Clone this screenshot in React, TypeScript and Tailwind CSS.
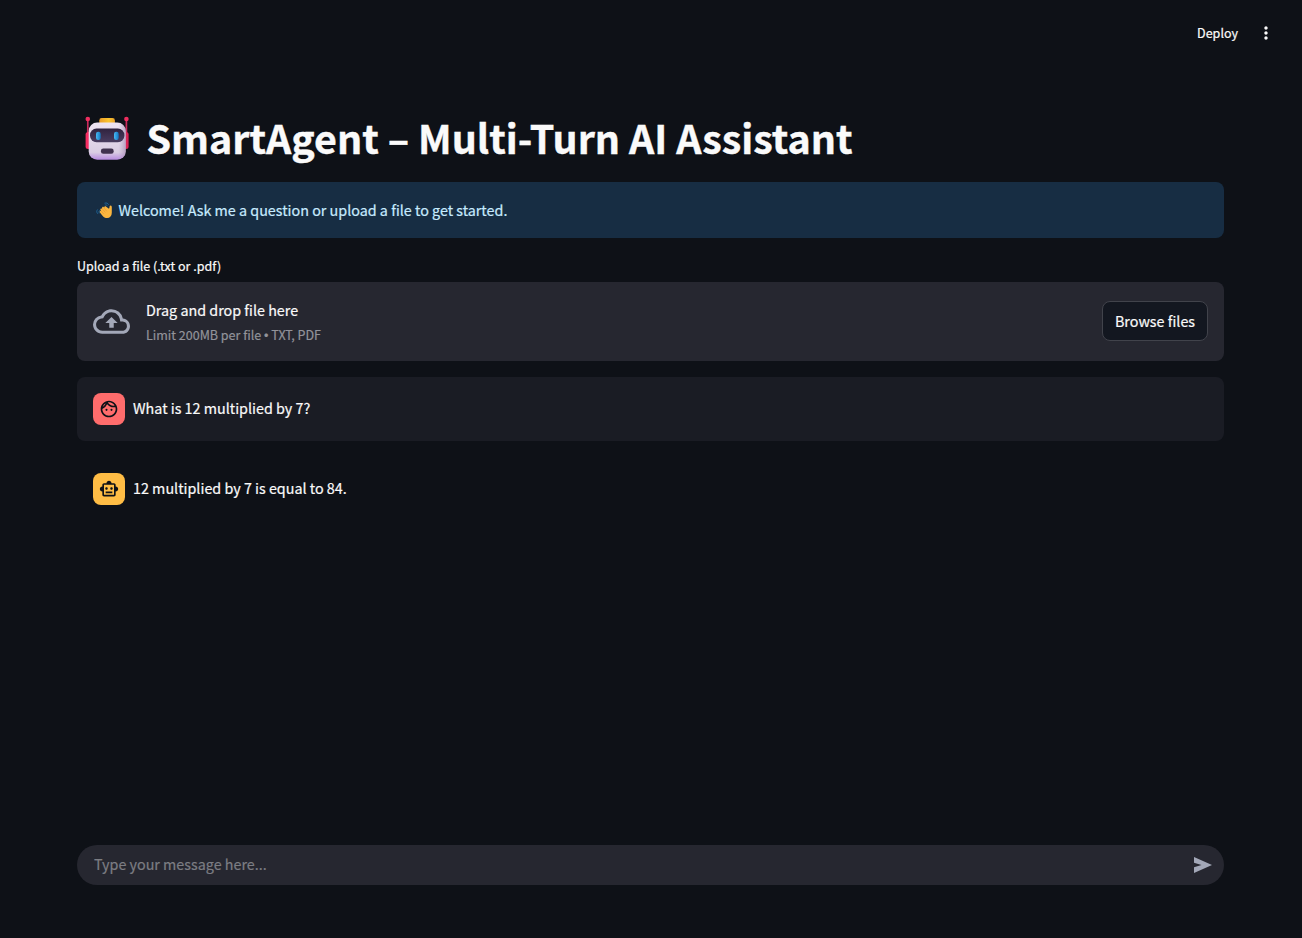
import type { ReactNode } from "react";
import { MdMoreVert, MdOutlineBackup, MdOutlineFace, MdOutlineSmartToy } from "react-icons/md";

function RobotEmoji() {
  return (
    <svg viewBox="0 0 46 46" className="h-[46px] w-[46px] shrink-0" aria-hidden="true">
      <defs>
        <linearGradient id="head" x1="0" y1="0" x2="0" y2="1">
          <stop offset="0" stopColor="#eee4f2" />
          <stop offset="0.8" stopColor="#dacde3" />
          <stop offset="1" stopColor="#b88be0" />
        </linearGradient>
        <linearGradient id="side" x1="0" y1="0" x2="1" y2="0">
          <stop offset="0" stopColor="#b9a5bf" stopOpacity="0" />
          <stop offset="0.8" stopColor="#b9a5bf" stopOpacity="0" />
          <stop offset="1" stopColor="#a78bb4" stopOpacity="0.7" />
        </linearGradient>
        <linearGradient id="visor" x1="0" y1="0" x2="0" y2="1">
          <stop offset="0" stopColor="#30233f" />
          <stop offset="1" stopColor="#4a3d61" />
        </linearGradient>
        <linearGradient id="eye" x1="0" y1="0" x2="1" y2="0">
          <stop offset="0" stopColor="#49baf4" />
          <stop offset="1" stopColor="#1477c2" />
        </linearGradient>
        <linearGradient id="cap" x1="0" y1="0" x2="1" y2="0">
          <stop offset="0" stopColor="#e99a28" />
          <stop offset="0.6" stopColor="#fbc52f" />
          <stop offset="1" stopColor="#e8a22a" />
        </linearGradient>
      </defs>
      <path d="M3.8 3v17M42.4 3v17" stroke="#c92b5c" strokeWidth="1.7" />
      <circle cx="3.8" cy="3" r="2.3" fill="#ef2e5f" />
      <circle cx="42.4" cy="3" r="2.3" fill="#ef2e5f" />
      <rect x="1.6" y="16" width="6" height="17" rx="2.5" fill="#f62d62" />
      <rect x="38.6" y="16" width="6" height="17" rx="2.5" fill="#d92456" />
      <rect x="15.3" y="2" width="15.6" height="7" rx="2.4" fill="url(#cap)" />
      <rect x="4.7" y="6.6" width="37" height="37.2" rx="8.5" fill="url(#head)" />
      <rect x="4.7" y="6.6" width="37" height="37.2" rx="8.5" fill="url(#side)" />
      <rect x="6" y="12.6" width="34.4" height="13.6" rx="6.5" fill="url(#visor)" />
      <rect x="12" y="15.7" width="4.7" height="8.2" rx="2.2" fill="url(#eye)" />
      <rect x="30" y="15.7" width="4.7" height="8.2" rx="2.2" fill="url(#eye)" />
      <rect x="16.9" y="32.6" width="12.8" height="5.2" rx="2.4" fill="#41324f" />
    </svg>
  );
}

function WaveEmoji() {
  return (
    <svg viewBox="0 0 18 18" className="h-[18px] w-[18px] shrink-0" aria-hidden="true">
      <path d="M1.4 8.8c-1 1.2-.9 2.5.2 3.7M3.4 9.6c-.7.8-.6 1.7 0 2.4M8.9 2.1c1.7-.5 3 .1 3.5 1.3M9.2 3.900c.9-.2 1.6.1 2 .8" fill="none" stroke="#1e659a" strokeWidth="1" strokeLinecap="round" />
      <path d="M14.600 4.500c1 0 1.200.9 1.200 1.900v5.400c0 3.200-1.900 5.200-4.600 5.300-2 0-3.600-.9-4.700-2.400l-2.600-3.100c-.7-1.100.4-2 1.200-1.200l-.6-1.400c-.6-1.100.7-2 1.500-1.200l.1-.6c-.3-1.100 1-1.800 1.700-1l.5.4c-.1-1.200 1.200-1.700 1.900-.8l2.800 2c.3-.6.4-.8.500-1.500.1-1 .2-1.800 1.100-1.800Z" fill="#fbb63f" />
      <path d="m5.300 10.200 2.300 2.500M6.400 8.100l2.700 3.100M8.300 7.300l2.300 2.700" stroke="#dd8e34" strokeWidth=".5" strokeLinecap="round" />
    </svg>
  );
}

function Message({ icon, avatar, panel, children }: { icon: ReactNode; avatar: string; panel: string; children: ReactNode }) {
  return (
    <div className={`flex h-16 items-center gap-2 rounded-lg px-4 ${panel}`}>
      <div className={`flex h-8 w-8 items-center justify-center rounded-lg text-[#0e1117] ${avatar}`}>{icon}</div>
      <p className="pb-0.5 text-[14.33px] leading-6">{children}</p>
    </div>
  );
}

export default function App() {
  return (
    <div className="flex h-[938px] w-full flex-col bg-[#0e1117] font-['Noto_Sans_CJK_SC',sans-serif] text-[#fafafa] [-webkit-text-stroke:0.2px]">
      <header className="flex h-[66px] shrink-0 items-center justify-end gap-[18px] pr-[26px]">
        <button className="text-[12.53px] leading-5">Deploy</button>
        <MdMoreVert size={20} />
      </header>
      <main className="flex min-h-0 flex-1 flex-col pr-[78px] pl-[77px]">
        <h1 className="mt-[46px] flex h-[54px] items-center gap-[16.4px] pl-[7px] text-[39.4px] leading-[54px] font-bold whitespace-nowrap [-webkit-text-stroke:0.4px]">
          <RobotEmoji />
          <span className="pb-1">SmartAgent – Multi-Turn AI Assistant</span>
        </h1>
        <div className="mt-4 flex h-14 shrink-0 items-center gap-[4.4px] rounded-lg bg-[#172d43] pl-[19px] text-[14.33px] leading-6 text-[#c7ebff]">
          <WaveEmoji />
          <span>Welcome! Ask me a question or upload a file to get started.</span>
        </div>
        <label className="mt-[17px] mb-[5px] text-[12.53px] leading-[22px]">Upload a file (.txt or .pdf)</label>
        <section className="flex h-[79px] shrink-0 items-center rounded-lg bg-[#262730] px-4">
          <MdOutlineBackup size={37} className="text-[#a3a8b8]" />
          <div className="ml-4 flex flex-1 flex-col">
            <span className="text-[14.33px] leading-[26px]">Drag and drop file here</span>
            <span className="text-[12.53px] leading-6 text-[#92939a]">
              Limit 200MB per file <span className="font-['Liberation_Sans',sans-serif] leading-none">•</span> TXT, PDF
            </span>
          </div>
          <button className="mb-px h-10 w-[106px] rounded-lg border border-[#41434b] bg-[#131720] text-[14.33px] leading-6">Browse files</button>
        </section>
        <div className="mt-4 flex flex-col gap-4">
          <Message avatar="bg-[#ff6c6c]" panel="bg-[#1a1c24]" icon={<MdOutlineFace size={20} />}>What is 12 multiplied by 7?</Message>
          <Message avatar="bg-[#ffbd45]" panel="" icon={<MdOutlineSmartToy size={20} />}>12 multiplied by 7 is equal to 84.</Message>
        </div>
        <div className="mt-auto mb-[53px] flex h-10 shrink-0 items-center rounded-full bg-[#262730] pr-2.5 pl-[17px]">
          <input aria-label="Message" placeholder="Type your message here..." className="min-w-0 flex-1 bg-transparent pb-0.5 text-[14.33px] leading-6 outline-none placeholder:text-[#7c7d83]" />
          <svg viewBox="0 0 24 24" className="h-6 w-6 shrink-0 fill-[#a3a8b8]" aria-hidden="true">
            <path d="M4 20v-5.700l7.500-2.300L4 9.700V4l18 8z" />
          </svg>
        </div>
      </main>
    </div>
  );
}
